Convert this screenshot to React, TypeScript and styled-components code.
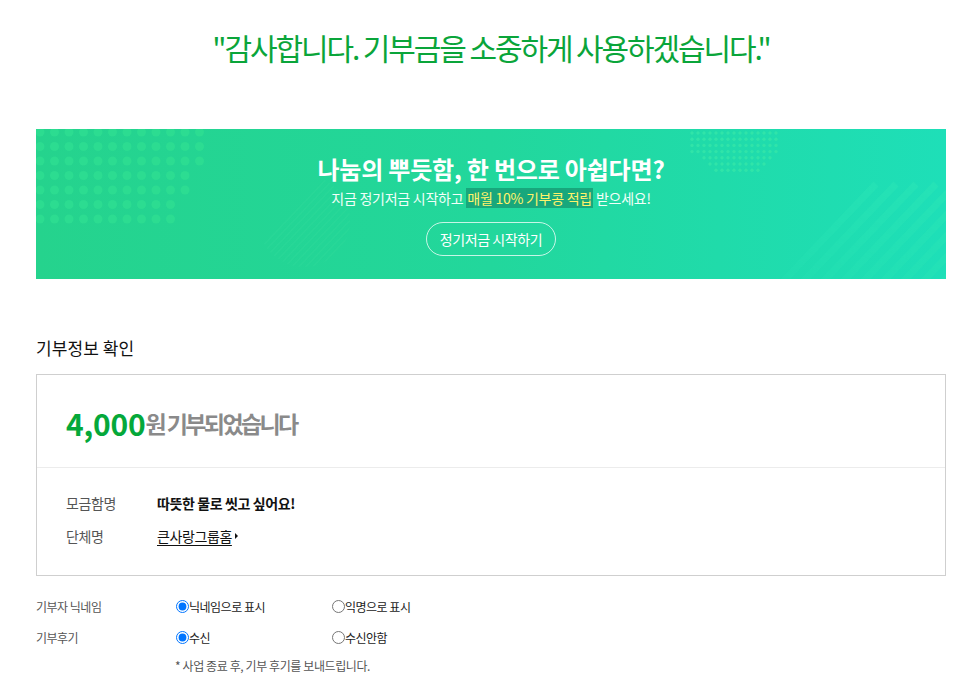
import React from "react";
import styled, { createGlobalStyle } from "styled-components";

const Global = createGlobalStyle`
  html, body { margin: 0; padding: 0; background: #fff; }
  body { font-family: "Noto Sans CJK KR", "Noto Sans", sans-serif; color: #111; }
  * { box-sizing: border-box; }
`;

const Page = styled.div`
  width: 972px;
  padding: 0 26px 0 36px;
`;

const Title = styled.h2`
  margin: 0;
  padding-top: 27px;
  height: 129px;
  text-align: center;
  font-size: 30px;
  line-height: 40px;
  font-weight: 400;
  letter-spacing: -2.1px;
  color: #0aa53a;
`;

const Banner = styled.div`
  position: relative;
  overflow: hidden;
  height: 150px;
  background: linear-gradient(90deg, #25d38d 0%, #22d79c 50%, #1edfb8 100%);
  display: flex;
  flex-direction: column;
  align-items: center;
  color: #fff;
`;

const Deco = styled.svg`
  position: absolute;
  inset: 0;
  pointer-events: none;
`;

const BannerHead = styled.div`
  position: relative;
  margin-top: 24px;
  font-size: 24px;
  line-height: 32px;
  font-weight: 700;
  letter-spacing: -0.2px;
`;

const BannerSub = styled.div`
  position: relative;
  margin-top: 3px;
  font-size: 14px;
  line-height: 20px;
  letter-spacing: -0.25px;
  color: #f2fff9;
`;

const Mark = styled.span`
  color: #fff36a;
  background: #18a77c;
  padding: 0 1px;
`;

const PillButton = styled.button`
  position: relative;
  margin-top: 14px;
  width: 130px;
  height: 34px;
  border-radius: 17px;
  border: 1px solid rgba(255, 255, 255, 0.75);
  background: transparent;
  color: #fff;
  font-family: inherit;
  font-size: 14px;
  letter-spacing: -0.4px;
  padding: 0;
`;

const SectionTitle = styled.h3`
  margin: 0;
  padding-top: 57px;
  height: 95px;
  font-size: 17px;
  line-height: 24px;
  font-weight: 400;
  letter-spacing: 0.1px;
  color: #111;
`;

const InfoBox = styled.div`
  border: 1px solid #cfcfcf;
  height: 202px;
  display: flex;
  flex-direction: column;
`;

const AmountRow = styled.div`
  height: 93px;
  border-bottom: 1px solid #ececec;
  display: flex;
  align-items: center;
  padding: 4px 0 0 29px;
`;

const Amount = styled.span`
  font-size: 30px;
  font-weight: 700;
  color: #05a83a;
  letter-spacing: -0.2px;
`;

const AmountText = styled.span`
  font-size: 23px;
  font-weight: 700;
  color: #8a8a8a;
  letter-spacing: -2.6px;
`;

const Rows = styled.div`
  padding: 25px 0 0 29px;
  display: flex;
  flex-direction: column;
  gap: 13px;
`;

const Row = styled.div`
  display: flex;
  align-items: center;
  height: 20px;
  font-size: 14px;
`;

const RowLabel = styled.span`
  width: 91px;
  color: #555;
  letter-spacing: -0.4px;
`;

const RowValue = styled.span<{ $link?: boolean }>`
  color: #111;
  font-weight: ${(p) => (p.$link ? 400 : 700)};
  text-decoration: ${(p) => (p.$link ? "underline" : "none")};
  text-underline-offset: 3px;
  letter-spacing: -0.4px;
  display: inline-flex;
  align-items: center;
`;

const Caret = styled.span`
  display: inline-block;
  margin-left: 3px;
  width: 0;
  height: 0;
  border-top: 3px solid transparent;
  border-bottom: 3px solid transparent;
  border-left: 3px solid #111;
`;

const Options = styled.div`
  padding-top: 19px;
  display: flex;
  flex-direction: column;
  gap: 9px;
`;

const OptionRow = styled.div`
  display: flex;
  align-items: center;
  height: 22px;
  font-size: 12px;
`;

const OptionLabel = styled.span`
  width: 139px;
  color: #555;
  letter-spacing: -0.5px;
`;

const Radio = styled.label<{ $w?: number }>`
  width: ${(p) => p.$w ?? 156}px;
  display: inline-flex;
  align-items: center;
  color: #222;
  letter-spacing: -0.5px;
  input { margin: 0 0 0 1px; width: 13px; height: 13px; }
`;

const Note = styled.div`
  padding: 9px 0 0 139px;
  font-size: 12px;
  color: #555;
  letter-spacing: -0.4px;
`;

function Decorations() {
  const big: JSX.Element[] = [];
  for (let r = 0; r < 7; r++) {
    for (let c = 0; c < 12; c++) {
      const x = 4 + c * 14.5;
      const y = 3 + r * 14.5;
      if (x > 170 - r * 5 && r > 2) continue;
      if (x > 165) continue;
      big.push(<circle key={`b${r}-${c}`} cx={x} cy={y} r={4.5} fill="#2fdf92" opacity={0.75} />);
    }
  }
  const small: JSX.Element[] = [];
  for (let r = 0; r < 7; r++) {
    for (let c = 0; c < 15; c++) {
      const x = 656 + c * 6;
      const y = 4 + r * 6.2;
      if (r > 3 && (x < 656 + (r - 3) * 8 || x > 740 - (r - 3) * 6)) continue;
      small.push(<circle key={`s${r}-${c}`} cx={x} cy={y} r={1.7} fill="#34e6a9" opacity={0.8} />);
    }
  }
  const stripes: JSX.Element[] = [];
  for (let i = 0; i < 10; i++) {
    const x0 = 740 + i * 20;
    stripes.push(
      <line key={`l${i}`} x1={x0} y1={160} x2={x0 + 100} y2={55} stroke="#2ce6b6" strokeWidth={7} opacity={0.55} />
    );
  }
  const hatch: JSX.Element[] = [];
  for (let i = 0; i < 16; i++) {
    const x0 = 200 + i * 7;
    hatch.push(<line key={`h${i}`} x1={x0} y1={145} x2={x0 + 100} y2={40} stroke="#2ed99a" strokeWidth={1.5} opacity={0.5} />);
  }
  return (
    <Deco width="910" height="150" viewBox="0 0 910 150">
      <defs>
        <clipPath id="hc"><circle cx="268" cy="92" r="46" /></clipPath>
        <linearGradient id="sf" x1="0" y1="1" x2="1" y2="0">
          <stop offset="0" stopColor="#fff" stopOpacity="0.2" />
          <stop offset="1" stopColor="#fff" stopOpacity="1" />
        </linearGradient>
        <mask id="sm"><rect x="700" y="50" width="210" height="100" fill="url(#sf)" /></mask>
      </defs>
      {big}
      {small}
      <g clipPath="url(#hc)">{hatch}</g>
      <g mask="url(#sm)">{stripes}</g>
    </Deco>
  );
}

export default function App() {
  return (
    <Page>
      <Global />
      <Title>"감사합니다. 기부금을 소중하게 사용하겠습니다."</Title>
      <Banner>
        <Decorations />
        <BannerHead>나눔의 뿌듯함, 한 번으로 아쉽다면?</BannerHead>
        <BannerSub>
          지금 정기저금 시작하고 <Mark>매월 10% 기부콩 적립</Mark> 받으세요!
        </BannerSub>
        <PillButton>정기저금 시작하기</PillButton>
      </Banner>
      <SectionTitle>기부정보 확인</SectionTitle>
      <InfoBox>
        <AmountRow>
          <Amount>4,000</Amount>
          <AmountText>원 기부되었습니다</AmountText>
        </AmountRow>
        <Rows>
          <Row>
            <RowLabel>모금함명</RowLabel>
            <RowValue>따뜻한 물로 씻고 싶어요!</RowValue>
          </Row>
          <Row>
            <RowLabel>단체명</RowLabel>
            <RowValue $link>큰사랑그룹홈</RowValue>
            <Caret />
          </Row>
        </Rows>
      </InfoBox>
      <Options>
        <OptionRow>
          <OptionLabel>기부자 닉네임</OptionLabel>
          <Radio>
            <input type="radio" name="nick" defaultChecked />
            닉네임으로 표시
          </Radio>
          <Radio>
            <input type="radio" name="nick" />
            익명으로 표시
          </Radio>
        </OptionRow>
        <OptionRow>
          <OptionLabel>기부후기</OptionLabel>
          <Radio>
            <input type="radio" name="review" defaultChecked />
            수신
          </Radio>
          <Radio>
            <input type="radio" name="review" />
            수신안함
          </Radio>
        </OptionRow>
      </Options>
      <Note>* 사업 종료 후, 기부 후기를 보내드립니다.</Note>
    </Page>
  );
}
